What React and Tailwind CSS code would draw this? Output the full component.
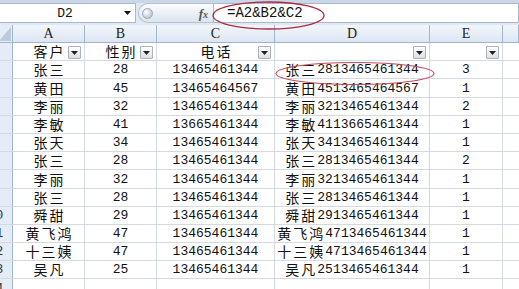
const COLS = [
  { key: 'a', w: 'w-[72px]' },
  { key: 'b', w: 'w-[72px]' },
  { key: 'c', w: 'w-[118px]' },
  { key: 'd', w: 'w-[155px]' },
  { key: 'e', w: 'w-[73px]' },
];

const ROWS = [
  ['张三', '28', '13465461344', '3'],
  ['黄田', '45', '13465464567', '1'],
  ['李丽', '32', '13465461344', '2'],
  ['李敏', '41', '13665461344', '1'],
  ['张天', '34', '13465461344', '1'],
  ['张三', '28', '13465461344', '2'],
  ['李丽', '32', '13465461344', '1'],
  ['张三', '28', '13465461344', '1'],
  ['舜甜', '29', '13465461344', '1'],
  ['黄飞鸿', '47', '13465461344', '1'],
  ['十三姨', '47', '13465461344', '1'],
  ['吴凡', '25', '13465461344', '1'],
];

function Cjk({ children, center }) {
  return (
    <span className={`font-['Noto_Sans_CJK_SC',sans-serif] text-[14px] tracking-[2px] text-[#111] ${center ? '-mr-[2px]' : ''}`}>
      {children}
    </span>
  );
}

function FilterBtn() {
  return (
    <span className="absolute right-[3px] top-[3px] w-[13px] h-[13px] rounded-[1px] border border-[#a9b1bc] bg-gradient-to-b from-white to-[#dcdfe4] flex items-center justify-center">
      <svg viewBox="0 0 7 4" className="w-[7px] h-[4px]"><polygon points="0,0 7,0 3.5,4" fill="#222" /></svg>
    </span>
  );
}

const cell = 'relative shrink-0 h-full flex items-end justify-center pb-[2px] border-r border-[#d5dae2] leading-[13px]';

function RowHead({ n }) {
  return (
    <div className="w-[34px] shrink-0 h-full flex items-end justify-center pb-[2px] bg-[#e4ecf7] border-r border-[#9eb6ce] text-[13px] leading-[13px] text-[#333]">
      {n}
    </div>
  );
}

export default function App() {
  return (
    <div className="w-[519px] h-[289px] overflow-hidden bg-white relative font-['Liberation_Mono',monospace] text-[#111]">
      <div className="h-[3px] bg-[#c9d7e9]" />

      <div className="flex h-[20px] bg-[#dfe8f3]">
        <div className="w-[136px] flex items-center bg-white border-y border-r border-[#a7b9cf]">
          <div className="flex-1 text-center text-[13px] leading-none pl-[6px]">D2</div>
          <svg viewBox="0 0 7 4" className="w-[7px] h-[4px] mr-[4px]"><polygon points="0,0 7,0 3.5,4" fill="#111" /></svg>
        </div>
        <div className="ml-[2px] w-[75px] flex items-center rounded-l-full bg-gradient-to-b from-[#fbfcfe] to-[#dce4ee] border-y border-l border-[#b3c1d3]">
          <span className="ml-[3px] w-[11px] h-[11px] rounded-full bg-[radial-gradient(circle_at_35%_35%,#ffffff,#aab4c1)] border border-[#9aa6b6]" />
          <span className="ml-auto mr-[5px] font-['Liberation_Serif',serif] italic font-bold text-[13px] leading-none text-[#555]">f<span className="text-[10px]">x</span></span>
        </div>
        <div className="flex-1 flex items-center bg-white border border-[#a7b9cf] pl-[13px] text-[14px] leading-none">
          =A2&amp;B2&amp;C2
        </div>
      </div>
      <div className="h-[2px] bg-[#dfe8f3]" />

      <div className="-ml-[21px]">
        {/* column headers */}
        <div className="flex h-[18px] border-b border-[#9eb6ce]">
          <div className="w-[34px] shrink-0 h-full bg-[#e4ecf7] border-r border-[#9eb6ce] flex items-end justify-end pr-[1px] pb-[1px]">
            <svg viewBox="0 0 12 14" className="w-[12px] h-[14px]"><polygon points="12,0 12,14 0,14" fill="#bccadb" /></svg>
          </div>
          {['A', 'B', 'C', 'D', 'E', 'F'].map((l, i) => (
            <div key={l}
              className={`${i < 5 ? COLS[i].w + ' shrink-0' : 'flex-1'} h-full flex items-center justify-center bg-gradient-to-b from-[#f2f6fb] to-[#dce6f3] border-r border-[#9eb6ce] font-['Liberation_Serif',serif] text-[14px] leading-none text-[#222] pt-[1px]`}>
              {i < 5 ? l : ''}
            </div>
          ))}
        </div>

        {/* row 1 */}
        <div className="flex h-[18.2px] border-b border-[#d5dae2]">
          <RowHead n={1} />
          <div className={`${cell} w-[72px]`}><Cjk center>客户</Cjk><FilterBtn /></div>
          <div className={`${cell} w-[72px]`}><Cjk center>性别</Cjk><FilterBtn /></div>
          <div className={`${cell} w-[118px]`}><Cjk center>电话</Cjk><FilterBtn /></div>
          <div className={`${cell} w-[155px]`}><FilterBtn /></div>
          <div className={`${cell} w-[73px]`}><FilterBtn /></div>
          <div className="flex-1" />
        </div>

        {ROWS.map((r, i) => (
          <div key={i} className="flex h-[18.2px] border-b border-[#d5dae2]">
            <RowHead n={i + 2} />
            <div className={`${cell} w-[72px]`}><Cjk center>{r[0]}</Cjk></div>
            <div className={`${cell} w-[72px] text-[13px]`}>{r[1]}</div>
            <div className={`${cell} w-[118px] text-[13px]`}>{r[2]}</div>
            <div className={`${cell} w-[155px] text-[13px]`}><Cjk>{r[0]}</Cjk>{r[1]}{r[2]}</div>
            <div className={`${cell} w-[73px] text-[13px]`}>{r[3]}</div>
            <div className="flex-1" />
          </div>
        ))}

        <div className="flex h-[18.2px] border-b border-[#d5dae2]">
          <RowHead n={14} />
          {COLS.map(c => <div key={c.key} className={`${cell} ${c.w}`} />)}
          <div className="flex-1" />
        </div>
      </div>

      {/* annotations */}
      <svg className="absolute left-0 top-0 pointer-events-none" width="519" height="289">
        <ellipse cx="268.5" cy="15.5" rx="55.5" ry="13.5" fill="none" stroke="#b02a3e" strokeWidth="1.3" />
        <ellipse cx="355" cy="73.5" rx="79" ry="11" fill="none" stroke="#c0485a" strokeWidth="1.1" />
      </svg>
    </div>
  );
}
